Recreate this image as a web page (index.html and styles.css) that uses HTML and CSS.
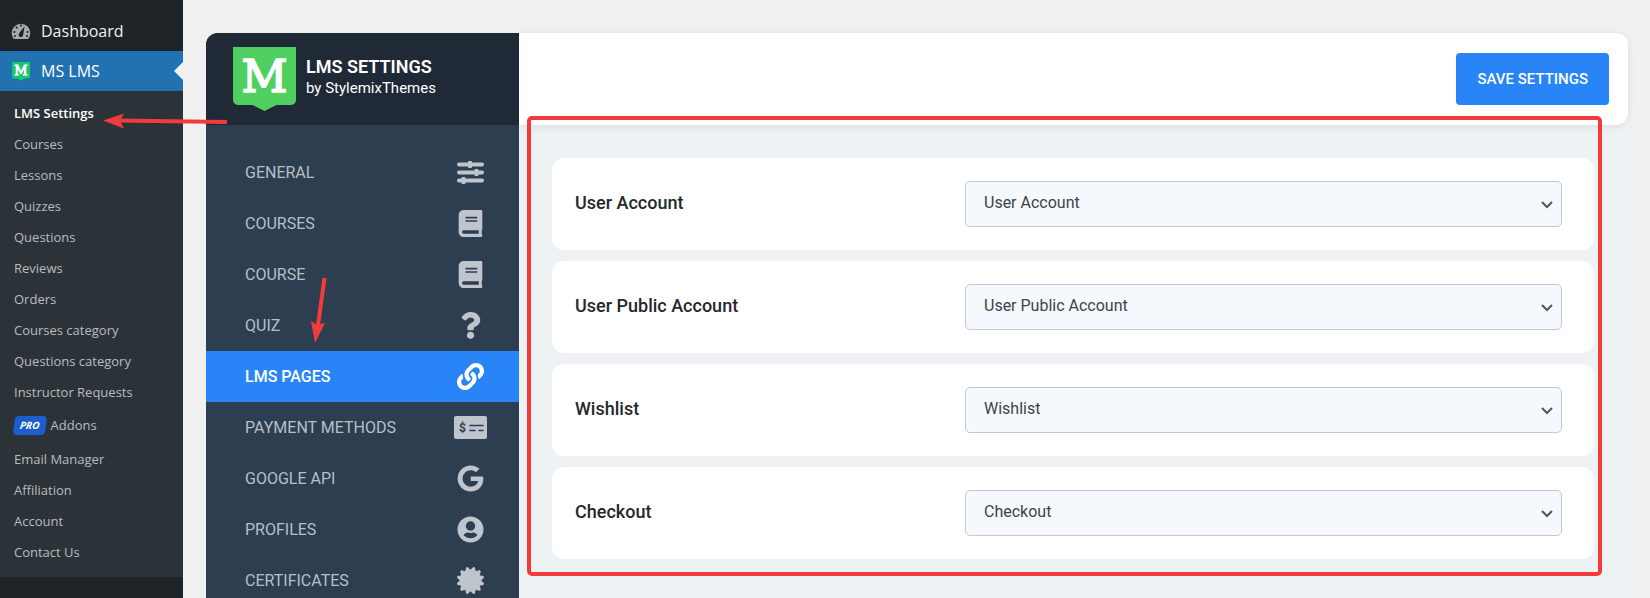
FILE: index.html
```html
<!DOCTYPE html>
<html lang="en">
<head>
  <meta charset="UTF-8" />
  <meta name="viewport" content="width=device-width, initial-scale=1.0"/>
  <title>LMS Settings</title>
  <link rel="stylesheet" href="styles.css">
</head>
<body>

  <!-- Admin Menu -->
  <nav class="admin-menu">
    <a href="#" class="menu-top">
      <svg class="menu-icon" viewBox="0 0 20 20">
        <path fill="#a7aaad" d="M2.8 18A9.3 9.3 0 1 1 17.2 18z"/>
        <g fill="#1d2327">
          <circle cx="10" cy="4.5" r="1.1"/>
          <circle cx="5.6" cy="6.6" r="1.1"/>
          <circle cx="3.4" cy="11" r="1.1"/>
          <circle cx="16.6" cy="11" r="1.1"/>
          <circle cx="4" cy="15" r="1"/>
          <circle cx="16" cy="15" r="1"/>
          <path d="M13.6 5.2l-1.4 8.6a2.3 2.3 0 1 1-4-1.6z"/>
        </g>
      </svg>
      Dashboard
    </a>
    <a href="#" class="menu-top active">
      <svg class="menu-icon" viewBox="0 0 20 20">
        <path fill="#17c86b" d="M1 1h18v14.500a2 2 0 0 1-2 2h-3.500L10 19.500l-3.500-2H3a2 2 0 0 1-2-2z"/>
        <text x="10" y="13.500" class="logo-letter" font-size="13" stroke-width="0.800">M</text>
      </svg>
      MS LMS
    </a>
    <ul class="submenu">
      <li><a href="#" class="current">LMS Settings</a></li>
      <li><a href="#">Courses</a></li>
      <li><a href="#">Lessons</a></li>
      <li><a href="#">Quizzes</a></li>
      <li><a href="#">Questions</a></li>
      <li><a href="#">Reviews</a></li>
      <li><a href="#">Orders</a></li>
      <li><a href="#">Courses category</a></li>
      <li><a href="#">Questions category</a></li>
      <li><a href="#">Instructor Requests</a></li>
      <li class="addons"><a href="#"><span class="pro">PRO</span>Addons</a></li>
      <li><a href="#">Email Manager</a></li>
      <li><a href="#">Affiliation</a></li>
      <li><a href="#">Account</a></li>
      <li><a href="#">Contact Us</a></li>
    </ul>
  </nav>

  <!-- Settings Panel -->
  <div class="panel">
    <aside class="settings-nav">
      <div class="brand">
        <svg class="brand-logo" viewBox="0 0 63 64">
          <path fill="#4fcf5f" d="M0 0h63v53a5 5 0 0 1-5 5H43.500L31.500 64 19.500 58H5a5 5 0 0 1-5-5z"/>
          <text x="31.500" y="45" class="logo-letter" font-size="45" stroke-width="1.600">M</text>
        </svg>
        <div class="brand-text">
          <h1>LMS SETTINGS</h1>
          <p>by StylemixThemes</p>
        </div>
      </div>
      <ul class="tabs">
        <li><a href="#">GENERAL
          <svg class="tab-icon" viewBox="0 0 27 27">
            <path d="M2 5.500h23M2 13.500h23M2 21.500h23" fill="none" stroke="currentColor" stroke-width="4" stroke-linecap="round"/>
            <rect x="11" y="2" width="4" height="7" rx="1"/>
            <rect x="17.500" y="10" width="4" height="7" rx="1"/>
            <rect x="4.500" y="18" width="4" height="7" rx="1"/>
          </svg>
        </a></li>
        <li><a href="#">COURSES
          <svg class="tab-icon" viewBox="0 0 448 512"><path d="M448 360V24c0-13.300-10.700-24-24-24H96C43 0 0 43 0 96v320c0 53 43 96 96 96h328c13.300 0 24-10.700 24-24v-16c0-7.500-3.500-14.300-8.900-18.700-4.200-15.400-4.200-59.300 0-74.700 5.400-4.300 8.900-11.100 8.900-18.600zM128 134c0-3.300 2.700-6 6-6h212c3.300 0 6 2.700 6 6v20c0 3.300-2.700 6-6 6H134c-3.300 0-6-2.700-6-6v-20zm0 64c0-3.300 2.700-6 6-6h212c3.300 0 6 2.700 6 6v20c0 3.300-2.700 6-6 6H134c-3.300 0-6-2.700-6-6v-20zm253.400 250H96c-17.700 0-32-14.300-32-32 0-17.600 14.400-32 32-32h285.400c-1.900 17.100-1.900 46.900 0 64z"/></svg>
        </a></li>
        <li><a href="#">COURSE
          <svg class="tab-icon" viewBox="0 0 448 512"><path d="M448 360V24c0-13.300-10.700-24-24-24H96C43 0 0 43 0 96v320c0 53 43 96 96 96h328c13.300 0 24-10.700 24-24v-16c0-7.500-3.500-14.300-8.900-18.700-4.200-15.400-4.200-59.300 0-74.700 5.400-4.300 8.900-11.100 8.900-18.600zM128 134c0-3.300 2.700-6 6-6h212c3.300 0 6 2.700 6 6v20c0 3.300-2.700 6-6 6H134c-3.300 0-6-2.700-6-6v-20zm0 64c0-3.300 2.700-6 6-6h212c3.300 0 6 2.700 6 6v20c0 3.300-2.700 6-6 6H134c-3.300 0-6-2.700-6-6v-20zm253.400 250H96c-17.700 0-32-14.300-32-32 0-17.600 14.400-32 32-32h285.400c-1.900 17.100-1.900 46.900 0 64z"/></svg>
        </a></li>
        <li><a href="#">QUIZ
          <svg class="tab-icon" viewBox="0 0 384 512"><path d="M202 0C122.200 0 70.500 32.700 29.900 91c-7.400 10.600-5.100 25.100 5.200 32.900l43.100 32.700c10.400 7.900 25.100 6 33.300-4.100 25-31.400 43.600-49.500 82.700-49.500 30.800 0 68.800 19.800 68.800 49.600 0 22.600-18.600 34.200-49 51.200-35.400 19.900-82.300 44.600-82.300 106.400V320c0 13.300 10.700 24 24 24h72.500c13.300 0 24-10.700 24-24v-5.800c0-42.900 125.300-44.600 125.300-160.600C377.500 66.300 286.900 0 202 0zM192 373.500c-38.200 0-69.300 31-69.300 69.200S153.800 512 192 512s69.300-31.100 69.300-69.300-31.100-69.200-69.300-69.200z"/></svg>
        </a></li>
        <li><a href="#" class="active">LMS PAGES
          <svg class="tab-icon" viewBox="0 0 512 512"><path d="M326.612 185.391c59.747 59.809 58.927 155.698.36 214.590-.11.12-.24.25-.36.37l-67.200 67.200c-59.270 59.270-155.699 59.262-214.960 0-59.270-59.260-59.270-155.700 0-214.960l37.106-37.106c9.840-9.840 26.786-3.300 27.294 10.606.648 17.722 3.826 35.527 9.690 52.721 1.986 5.822.567 12.262-3.783 16.612l-13.087 13.087c-28.026 28.026-28.905 73.660-1.155 101.960 28.024 28.579 74.086 28.749 102.325.51l67.200-67.190c28.191-28.191 28.073-73.757 0-101.830-3.701-3.694-7.429-6.564-10.341-8.569a16.037 16.037 0 0 1-6.947-12.606c-.396-10.567 3.348-21.456 11.698-29.806l21.054-21.055c5.521-5.521 14.182-6.199 20.584-1.731a152.482 152.482 0 0 1 20.522 17.197zM467.547 44.449c-59.261-59.262-155.690-59.270-214.960 0l-67.200 67.200c-.12.12-.25.25-.36.37-58.566 58.892-59.387 154.781.36 214.590a152.454 152.454 0 0 0 20.521 17.196c6.402 4.468 15.064 3.789 20.584-1.731l21.054-21.055c8.350-8.350 12.094-19.239 11.698-29.806a16.037 16.037 0 0 0-6.947-12.606c-2.912-2.005-6.640-4.875-10.341-8.569-28.073-28.073-28.191-73.639 0-101.830l67.200-67.190c28.239-28.239 74.300-28.069 102.325.51 27.750 28.300 26.872 73.934-1.155 101.960l-13.087 13.087c-4.350 4.350-5.769 10.790-3.783 16.612 5.864 17.194 9.042 34.999 9.690 52.721.509 13.906 17.454 20.446 27.294 10.606l37.106-37.106c59.271-59.259 59.271-155.699.001-214.959z"/></svg>
        </a></li>
        <li><a href="#">PAYMENT METHODS
          <svg class="tab-icon" viewBox="0 0 33 27">
            <rect x="0" y="2" width="33" height="23" rx="2"/>
            <text x="8.500" y="17.500" class="icon-dollar">$</text>
            <path d="M16 11.500h13M16 16.500h5M25 16.500h4" fill="none" stroke="#2d3e50" stroke-width="1.500" stroke-linecap="round"/>
          </svg>
        </a></li>
        <li><a href="#">GOOGLE API
          <svg class="tab-icon" viewBox="0 0 488 512"><path d="M488 261.800C488 403.300 391.100 504 248 504 110.800 504 0 393.200 0 256S110.800 8 248 8c66.800 0 123 24.500 166.300 64.900l-67.500 64.900C258.500 52.600 94.300 116.600 94.300 256c0 86.500 69.100 156.600 153.700 156.600 98.200 0 135-70.400 140.800-106.900H248v-85.300h236.100c2.300 12.700 3.900 24.900 3.900 41.400z"/></svg>
        </a></li>
        <li><a href="#">PROFILES
          <svg class="tab-icon" viewBox="0 0 27 27">
            <circle cx="13.500" cy="13.500" r="13"/>
            <circle cx="13.500" cy="10" r="4.700" fill="#2d3e50"/>
            <path d="M6.500 19.300c1.200-2 2.700-2.800 4.300-2.800 1 0 1.500.5 2.700.5s1.700-.5 2.700-.5c1.600 0 3.100.8 4.300 2.800-4 4-10 4-14 0z" fill="#2d3e50"/>
          </svg>
        </a></li>
        <li><a href="#">CERTIFICATES
          <svg class="tab-icon" viewBox="0 0 512 512"><path d="M458.622 255.920l45.985-45.005c13.708-12.977 7.316-36.039-10.664-40.339l-62.650-15.990 17.661-62.015c4.991-17.838-11.829-34.663-29.661-29.671l-61.994 17.667-15.984-62.671C337.085.197 313.765-6.276 300.990 7.228L256 53.570 211.011 7.229c-12.630-13.351-36.047-7.234-40.325 10.668l-15.984 62.671-61.995-17.667C74.870 57.907 58.056 74.738 63.046 92.572l17.661 62.015-62.650 15.990C.069 174.878-6.310 197.944 7.392 210.915l45.985 45.005-45.985 45.004c-13.708 12.977-7.316 36.039 10.664 40.339l62.650 15.990-17.661 62.015c-4.991 17.838 11.829 34.663 29.661 29.671l61.994-17.667 15.984 62.671c4.439 18.575 27.696 24.018 40.325 10.668L256 458.610l44.989 46.001c12.500 13.488 35.987 7.486 40.325-10.668l15.984-62.671 61.994 17.667c17.836 4.994 34.651-11.837 29.661-29.671l-17.661-62.015 62.650-15.990c17.987-4.302 24.366-27.367 10.664-40.339l-45.984-45.004z"/></svg>
        </a></li>
      </ul>
    </aside>

    <form class="settings">
      <header class="settings-header">
        <button type="button" class="save-btn">SAVE SETTINGS</button>
      </header>
      <div class="fields">
        <div class="field">
          <label for="userAccount">User Account</label>
          <div class="select-wrap">
            <select id="userAccount"><option>User Account</option></select>
            <svg class="chevron" viewBox="0 0 12 8"><path d="M1 1l5 5 5-5"/></svg>
          </div>
        </div>
        <div class="field">
          <label for="publicAccount">User Public Account</label>
          <div class="select-wrap">
            <select id="publicAccount"><option>User Public Account</option></select>
            <svg class="chevron" viewBox="0 0 12 8"><path d="M1 1l5 5 5-5"/></svg>
          </div>
        </div>
        <div class="field">
          <label for="wishlist">Wishlist</label>
          <div class="select-wrap">
            <select id="wishlist"><option>Wishlist</option></select>
            <svg class="chevron" viewBox="0 0 12 8"><path d="M1 1l5 5 5-5"/></svg>
          </div>
        </div>
        <div class="field">
          <label for="checkout">Checkout</label>
          <div class="select-wrap">
            <select id="checkout"><option>Checkout</option></select>
            <svg class="chevron" viewBox="0 0 12 8"><path d="M1 1l5 5 5-5"/></svg>
          </div>
        </div>
        <div class="highlight"></div>
      </div>
    </form>
  </div>

  <!-- Pointers -->
  <svg class="pointer pointer-menu" viewBox="0 0 126 18">
    <path d="M125 10L16 8.500" fill="none" stroke="#f23c3c" stroke-width="4"/>
    <path d="M1 8.500L22 1.500l-4 7 4 8z" fill="#f23c3c"/>
  </svg>
  <svg class="pointer pointer-tab" viewBox="0 0 18 68">
    <path d="M14.500 1L7.500 52" fill="none" stroke="#f23c3c" stroke-width="4"/>
    <path d="M5 66L1 44l6.500 4L15 46z" fill="#f23c3c"/>
  </svg>

</body>
</html>
```
FILE: styles.css
```css
* {
  margin: 0;
  padding: 0;
  box-sizing: border-box;
}

body {
  min-height: 100vh;
  display: flex;
  background: #f0f0f0;
  font-family: Roboto, sans-serif;
  overflow: hidden;
  position: relative;
}

ul {
  list-style: none;
}

a {
  text-decoration: none;
}

/* Admin menu */
.admin-menu {
  width: 183px;
  flex-shrink: 0;
  padding-top: 11px;
  background: #1d2327;
  font-family: "Open Sans", "Noto Sans", sans-serif;
}

.menu-top {
  display: flex;
  align-items: center;
  gap: 10px;
  height: 40px;
  padding-left: 11px;
  color: #f0f0f1;
  font-size: 16px;
  position: relative;
}

.menu-top.active {
  background: #2271b1;
  color: #fff;
}

.menu-top.active::after {
  content: "";
  position: absolute;
  right: 0;
  top: 11px;
  border: 9px solid transparent;
  border-left-width: 0;
  border-right-color: #f0f0f0;
}

.menu-icon {
  width: 20px;
  height: 20px;
}

.logo-letter {
  font-family: "DejaVu Serif", serif;
  fill: #fff;
  stroke: #fff;
  text-anchor: middle;
}

.submenu {
  padding: 7px 0 9px;
  background: #2c3338;
}

.submenu a {
  display: flex;
  align-items: center;
  height: 31px;
  padding: 0 0 2px 14px;
  color: #b9bcbf;
  font-size: 13px;
}

.submenu .current {
  color: #fff;
  font-weight: 600;
}

.submenu .addons a {
  height: 36px;
}

.pro {
  margin-right: 5px;
  padding: 2px 6px;
  background: #1a5fcb;
  border-radius: 4px;
  color: #fff;
  font-size: 10px;
  line-height: 15px;
  font-weight: 700;
  font-style: italic;
  transform: skewX(-8deg);
}

/* Settings panel */
.panel {
  flex: 1;
  display: flex;
  height: 100vh;
  padding: 33px 22px 0 23px;
}

.settings-nav {
  width: 313px;
  flex-shrink: 0;
  background: #2d3e50;
  border-top-left-radius: 12px;
  overflow: hidden;
}

.brand {
  display: flex;
  align-items: center;
  gap: 10px;
  height: 92px;
  padding-left: 27px;
  background: #1f2a36;
  color: #fff;
}

.brand-logo {
  width: 63px;
  height: 64px;
}

.brand-text {
  padding-bottom: 4px;
}

.brand h1 {
  font-size: 18px;
  line-height: 22px;
  font-weight: 600;
}

.brand p {
  font-size: 15px;
  line-height: 20px;
}

.tabs {
  padding-top: 22px;
}

.tabs a {
  display: flex;
  align-items: center;
  justify-content: space-between;
  height: 51px;
  padding: 0 32px 0 39px;
  color: #b8bfc7;
  font-size: 16px;
}

.tabs .active {
  background: #2985f7;
  color: #fff;
  font-weight: 500;
}

.tab-icon {
  width: 33px;
  height: 27px;
  fill: #bfc5cc;
  color: #bfc5cc;
}

.active .tab-icon {
  fill: #fff;
}

.icon-dollar {
  fill: #2d3e50;
  font-size: 12px;
  font-weight: 700;
  text-anchor: middle;
}

/* Fields */
.settings {
  flex: 1;
  background: #eef2f5;
}

.settings-header {
  display: flex;
  align-items: center;
  justify-content: flex-end;
  height: 92px;
  padding-right: 19px;
  background: #fff;
  border-radius: 0 12px 12px 0;
  box-shadow: 0 2px 8px rgba(0, 0, 0, 0.08);
}

.save-btn {
  padding: 16px 21px;
  border: none;
  border-radius: 4px;
  background: #2985f7;
  color: #fff;
  font-family: inherit;
  font-size: 15px;
  line-height: 20px;
  font-weight: 500;
  cursor: pointer;
}

.fields {
  display: flex;
  flex-direction: column;
  gap: 11px;
  padding: 33px 34px 17px 33px;
  position: relative;
}

.field {
  display: grid;
  grid-template-columns: 390fr 597fr;
  align-items: center;
  padding: 23px 32px 23px 23px;
  background: #fff;
  border-radius: 12px;
}

.field label {
  padding-bottom: 4px;
  color: #23282d;
  font-size: 18px;
  font-weight: 500;
}

.select-wrap {
  position: relative;
}

.select-wrap select {
  display: block;
  width: 100%;
  height: 46px;
  padding: 0 40px 3px 18px;
  border: 1px solid #c3c8d3;
  border-radius: 5px;
  background: #f5f9fd;
  color: #3c434a;
  font-family: inherit;
  font-size: 16px;
  appearance: none;
}

.chevron {
  position: absolute;
  right: 9px;
  top: 20px;
  width: 12px;
  height: 8px;
  fill: none;
  stroke: #555;
  stroke-width: 2;
  pointer-events: none;
}

/* Annotations over the page */
.highlight {
  position: absolute;
  top: -9px;
  right: 26px;
  bottom: 0;
  left: 8px;
  border: 4px solid #f23c3c;
  border-radius: 5px;
  pointer-events: none;
}

.pointer {
  position: absolute;
  pointer-events: none;
}

.pointer-menu {
  left: 102px;
  top: 112px;
  width: 126px;
  height: 18px;
}

.pointer-tab {
  left: 310px;
  top: 277px;
  width: 18px;
  height: 68px;
}
```
